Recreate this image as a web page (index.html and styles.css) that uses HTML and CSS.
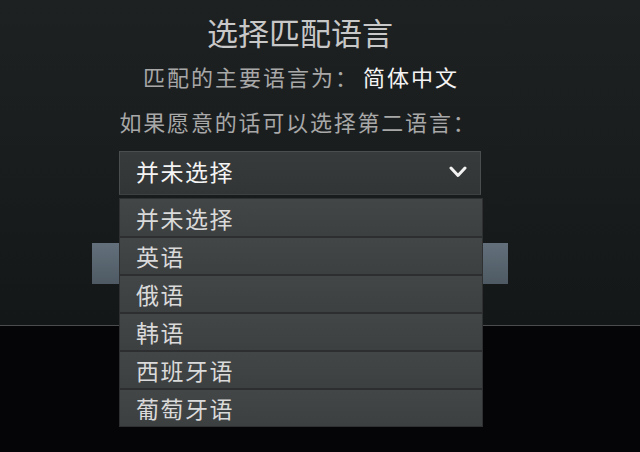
FILE: index.html
```
<!DOCTYPE html>
<html lang="zh-CN">
<head>
<meta charset="utf-8">
<title>选择匹配语言</title>
<link rel="stylesheet" href="styles.css">
</head>
<body>
<div class="screen">
  <div class="upper">
    <div class="dialog">
      <h1 class="title">选择匹配语言</h1>
      <p class="line primary"><span class="label">匹配的主要语言为：</span><span class="value">简体中文</span></p>
      <p class="line">如果愿意的话可以选择第二语言：</p>
      <div class="select-wrap">
        <div class="select">
          <span class="select-text">并未选择</span>
          <svg class="chevron" width="20" height="12" viewBox="0 0 20 12"><path d="M3 2 L10 9.5 L17 2" fill="none" stroke="#f2f2f2" stroke-width="3" stroke-linecap="round" stroke-linejoin="round"/></svg>
        </div>
        <ul class="dropdown">
          <li class="option">并未选择</li>
          <li class="option">英语</li>
          <li class="option">俄语</li>
          <li class="option">韩语</li>
          <li class="option">西班牙语</li>
          <li class="option">葡萄牙语</li>
        </ul>
      </div>
      <div class="buttons">
        <div class="btn"></div>
        <div class="btn"></div>
      </div>
    </div>
  </div>
  <div class="lower"></div>
</div>
</body>
</html>
```
FILE: styles.css
```
* { box-sizing: border-box; }
html, body { margin: 0; padding: 0; }
body {
  width: 640px;
  height: 452px;
  overflow: hidden;
  background: #050507;
  font-family: "Noto Sans CJK SC", "Noto Sans", sans-serif;
}
.screen {
  width: 640px;
  height: 452px;
  display: flex;
  flex-direction: column;
}
.upper {
  height: 326px;
  background: linear-gradient(180deg, #1e2122 0%, #1a1d1e 50%, #141718 100%);
  border-bottom: 1px solid #4a4c4f;
}
.lower {
  flex: 1;
  background: #050507;
}
.dialog {
  width: 416px;
  margin-left: 92px;
  padding-top: 12px;
  display: flex;
  flex-direction: column;
  align-items: center;
}
.title {
  margin: 0;
  font-size: 31px;
  line-height: 40px;
  font-weight: 400;
  color: #c8c8c8;
}
.line {
  margin: 8px 0 0;
  font-size: 22px;
  line-height: 32px;
  color: #a8a8a8;
  letter-spacing: 2px;
}
.line + .line { margin-top: 13px; letter-spacing: 1.8px; margin-left: -4px; }
.primary { margin-left: 2px; }
.primary .value { color: #f4f4f4; margin-left: 4px; }
.select-wrap {
  position: relative;
  width: 362px;
  margin-top: 14px;
}
.select {
  height: 44px;
  display: flex;
  align-items: center;
  justify-content: space-between;
  padding: 0 12px 4px 16px;
  background: linear-gradient(180deg, #383b3b 0%, #323535 100%);
  border: 1px solid #4b4e4f;
  border-bottom-color: #3e4142;
}
.select-text {
  font-size: 23px;
  color: #f4f4f4;
  letter-spacing: 1.5px;
}
.chevron { display: block; margin-top: 2px; }
.dropdown {
  position: absolute;
  left: 0;
  top: 47px;
  width: 364px;
  margin: 0;
  padding: 0;
  list-style: none;
  background: #3d4041;
  border: 1px solid #2e3031;
  z-index: 2;
}
.option {
  height: 38px;
  display: flex;
  align-items: center;
  padding-left: 16px;
  font-size: 23px;
  letter-spacing: 1.5px;
  color: #dadada;
  background: linear-gradient(180deg, #434647 0%, #3d4041 100%);
  border-top: 2px solid #2c2e2f;
}
.option:first-child { border-top: none; height: 37px; }
.buttons {
  width: 416px;
  margin-top: 48px;
  display: flex;
  justify-content: space-between;
}
.btn {
  width: 196px;
  height: 41px;
  background: linear-gradient(180deg, #63707b 0%, #4e5963 100%);
}
```
